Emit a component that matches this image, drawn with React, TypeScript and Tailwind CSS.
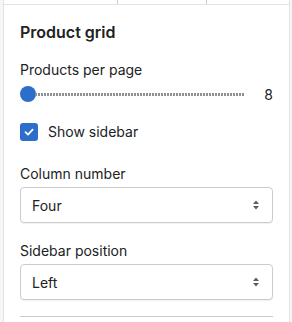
import type { ReactNode } from "react";

function Field({ label, children }: { label: string; children: ReactNode }) {
  return (
    <div className="flex flex-col gap-[3px]">
      <span className="text-[14px] leading-[20px] text-[#202223]">{label}</span>
      {children}
    </div>
  );
}

function Select({ value }: { value: string }) {
  return (
    <div className="flex h-[36px] items-center justify-between rounded-[4px] border border-[#c9cccf] bg-white pl-[11px] pr-[12px] shadow-[0_1px_0_rgba(0,0,0,0.05)]">
      <span className="text-[14px] text-[#202223]">{value}</span>
      <svg width="8" height="12" viewBox="0 0 8 12" className="text-[#5c5f62]">
        <path d="M4 1.5 7 5H1z" fill="currentColor" />
        <path d="M4 10.5 1 7h6z" fill="currentColor" />
      </svg>
    </div>
  );
}

export default function App() {
  return (
    <div className="flex h-[322px] w-[292px] overflow-hidden bg-[#f6f6f7] font-['Inter',sans-serif] antialiased">
      <div className="w-[3px] shrink-0" />
      <div className="flex w-[287px] shrink-0 flex-col border-x border-[#e1e3e5] bg-white">
        <div className="flex h-[5px] shrink-0 border-b border-[#e1e3e5]">
          <div className="w-[114px] border-r border-[#c9ccd0]" />
          <div className="w-[89px] border-r border-[#c9ccd0]" />
          <div className="flex-1" />
        </div>

        <div className="flex flex-col px-4 pt-[15px]">
          <h2 className="text-[16px] font-semibold leading-[24px] text-[#202223]">Product grid</h2>

          <div className="mt-[16px] flex flex-col">
            <span className="text-[14px] leading-[20px] text-[#202223]">Products per page</span>
            <div className="mt-[4px] flex h-[20px] items-center">
              <div className="h-[16px] w-[16px] shrink-0 rounded-full bg-[#2c6ecb]" />
              <div className="ml-[-1px] h-[3px] w-[210px] bg-[repeating-linear-gradient(90deg,#8c9196_0_2px,transparent_2px_3px)]" />
              <span className="ml-auto text-[14px] text-[#202223]">8</span>
            </div>
          </div>

          <label className="mt-[18px] flex items-center gap-[10px]">
            <span className="flex h-[18px] w-[18px] items-center justify-center rounded-[3px] bg-[#2c6ecb]">
              <svg width="12" height="12" viewBox="0 0 12 12">
                <path d="M2.5 6.2 5 8.6 9.6 3.6" fill="none" stroke="white" strokeWidth="1.8" strokeLinecap="round" strokeLinejoin="round" />
              </svg>
            </span>
            <span className="text-[14px] leading-[20px] text-[#202223]">Show sidebar</span>
          </label>

          <div className="mt-[22px] flex flex-col gap-[18px]">
            <Field label="Column number">
              <Select value="Four" />
            </Field>
            <Field label="Sidebar position">
              <Select value="Left" />
            </Field>
          </div>

          <div className="mt-[16px] border-t border-[#c9cccf]" />
        </div>
      </div>
    </div>
  );
}
